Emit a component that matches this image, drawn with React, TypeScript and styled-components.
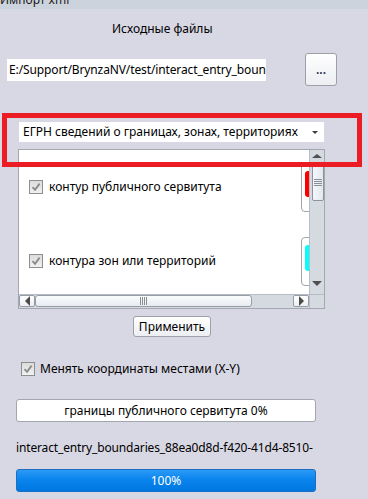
import React from "react";
import styled, { createGlobalStyle, css } from "styled-components";

const Global = createGlobalStyle`
  html, body {
    margin: 0;
    padding: 0;
    width: 368px;
    height: 499px;
    overflow: hidden;
    background: #d8d7e4;
  }
  * { box-sizing: border-box; }
  body {
    font-family: "Noto Sans", "Open Sans", sans-serif;
    font-size: 12px;
    line-height: 16px;
    color: #000;
  }
`;

const Window = styled.div`
  width: 368px;
  height: 499px;
  display: flex;
  flex-direction: column;
  overflow: hidden;
`;

const TitleBar = styled.div`
  height: 9px;
  flex: none;
  background: #cdd3dc;
  overflow: hidden;
`;

const TitleText = styled.div`
  margin-top: -8px;
  padding-left: 0;
  color: #1a1a1a;
`;

const Content = styled.div`
  display: flex;
  flex-direction: column;
  align-items: flex-start;
`;

const Heading = styled.div`
  margin-top: 12px;
  padding-left: 112px;
`;

const FileRow = styled.div`
  margin-top: 16px;
  margin-left: 7px;
  display: flex;
  align-items: center;
  gap: 39px;
`;

const PathField = styled.div`
  width: 259px;
  height: 22px;
  background: #fff;
  padding-left: 2px;
  display: flex;
  align-items: center;
  white-space: nowrap;
  overflow: hidden;
  letter-spacing: -0.12px;
`;

const buttonFace = css`
  border: 1px solid #9ca1a9;
  border-radius: 3px;
  background: linear-gradient(#ffffff, #eceef2);
  display: flex;
  align-items: center;
  justify-content: center;
`;

const BrowseButton = styled.div`
  ${buttonFace};
  width: 32px;
  height: 33px;
  color: #1c2a4a;
  font-weight: 600;
`;

const Highlight = styled.div`
  position: relative;
  z-index: 2;
  margin-top: 36px;
  margin-left: 19px;
  &::after {
    content: "";
    position: absolute;
    left: -17px;
    top: -9px;
    width: 350px;
    height: 44px;
    border: 5px solid #ec1c24;
    pointer-events: none;
  }
`;

const Combo = styled.div`
  width: 305px;
  height: 20px;
  background: #fff;
  display: flex;
  align-items: center;
  padding-left: 4px;
  padding-right: 6px;
  gap: 8px;
  white-space: nowrap;
`;

const ComboText = styled.span`
  flex: 1;
`;

const DownTriangle = styled.span<{ $size?: number; $color?: string }>`
  width: 0;
  height: 0;
  border-left: ${(p) => p.$size ?? 3}px solid transparent;
  border-right: ${(p) => p.$size ?? 3}px solid transparent;
  border-top: ${(p) => p.$size ?? 3}px solid ${(p) => p.$color ?? "#3c3c3c"};
`;

const UpTriangle = styled.span`
  width: 0;
  height: 0;
  border-left: 5px solid transparent;
  border-right: 5px solid transparent;
  border-bottom: 4px solid #505050;
`;

const SideTriangle = styled.span<{ $dir: "left" | "right" }>`
  width: 0;
  height: 0;
  border-top: 5px solid transparent;
  border-bottom: 5px solid transparent;
  ${(p) =>
    p.$dir === "left"
      ? css`border-right: 5px solid #4a4a4a;`
      : css`border-left: 5px solid #4a4a4a;`}
`;

const ListBox = styled.div`
  margin-top: 7px;
  margin-left: 18px;
  width: 307px;
  height: 160px;
  border: 1px solid #a3a7af;
  display: grid;
  grid-template-columns: 290px 15px;
  grid-template-rows: 144px 14px;
  background: #fff;
`;

const Viewport = styled.div`
  overflow: hidden;
  background: #fff;
`;

const Rows = styled.div`
  width: 340px;
  display: flex;
  flex-direction: column;
`;

const ItemRow = styled.div`
  height: 74px;
  display: flex;
  align-items: center;
  padding-left: 10px;
  gap: 6px;
`;

const ItemLabel = styled.span`
  flex: 1;
  white-space: nowrap;
`;

const Swatch = styled.div`
  width: 40px;
  height: 49px;
  margin-right: 18px;
  border: 1px solid #a0a4ab;
  border-radius: 4px;
  background: #fff;
  display: flex;
  align-items: flex-start;
  padding: 7px 0 0 3px;
`;

const SwatchColor = styled.div<{ $c: string }>`
  width: 20px;
  height: 26px;
  border-radius: 3px;
  background: ${(p) => p.$c};
`;

const CheckBoxBox = styled.span`
  width: 14px;
  height: 14px;
  flex: none;
  border: 1px solid #8d8e90;
  background: linear-gradient(#dcdcdc, #f1f1f1);
  display: flex;
  align-items: center;
  justify-content: center;
`;

const CheckBox = () => (
  <CheckBoxBox>
    <svg width="10" height="10" viewBox="0 0 10 10">
      <path d="M1.5 5.2 L4 7.8 L8.6 1.6" fill="none" stroke="#8a8a8a" strokeWidth="1.8" />
    </svg>
  </CheckBoxBox>
);

const VScroll = styled.div`
  background: #d5d9e0;
  border-left: 1px solid #b8bdc5;
  display: flex;
  flex-direction: column;
  align-items: center;
  padding-top: 4px;
`;

const VThumb = styled.div`
  margin-top: 6px;
  margin-left: 1px;
  width: 12px;
  height: 37px;
  border: 1px solid #8d939c;
  border-radius: 2px;
  background: linear-gradient(90deg, #f4f6f9, #e4e8ee);
  display: flex;
  flex-direction: column;
  align-items: center;
  justify-content: center;
  gap: 1px;
`;

const GripH = styled.span`
  width: 8px;
  height: 1px;
  background: #8a8f97;
`;

const VSpacer = styled.div`
  flex: 1;
`;

const VDown = styled.div`
  height: 12px;
  display: flex;
  align-items: flex-start;
  justify-content: center;
  padding-top: 1px;
  margin-bottom: 2px;
`;

const HScroll = styled.div`
  background: #d5d9e0;
  border-top: 1px solid #b8bdc5;
  display: flex;
  align-items: stretch;
  padding-bottom: 1px;
`;

const HButton = styled.div`
  ${buttonFace};
  width: 16px;
  border-radius: 2px;
  border-color: #979da6;
`;

const HThumb = styled.div`
  ${buttonFace};
  width: 217px;
  border-radius: 3px;
  border-color: #979da6;
  background: linear-gradient(#fbfcfd, #e7ebf0);
  gap: 1px;
`;

const GripV = styled.span`
  width: 1px;
  height: 8px;
  background: #8a8f97;
`;

const HSpacer = styled.div`
  flex: 1;
`;

const Corner = styled.div`
  background: #d5d9e0;
  border-left: 1px solid #b8bdc5;
  border-top: 1px solid #b8bdc5;
`;

const ApplyRow = styled.div`
  margin-top: 7px;
  align-self: stretch;
  padding-left: 133px;
`;

const PushButton = styled.div`
  ${buttonFace};
  width: 78px;
  height: 21px;
`;

const CheckRow = styled.label`
  margin-top: 24px;
  margin-left: 21px;
  display: flex;
  align-items: center;
  gap: 5px;
`;

const Progress = styled.div<{ $value: number }>`
  width: 300px;
  height: 23px;
  margin-left: 16px;
  border: 1px solid #a2a6ad;
  border-radius: 3px;
  display: flex;
  align-items: center;
  justify-content: center;
  background: #fff;
  ${(p) =>
    p.$value >= 100 &&
    css`
      border-color: #1b6fc0;
      background: linear-gradient(#2c9af6, #0a84ee 45%, #0077e0);
      color: #fff;
    `}
`;

const ProgressOne = styled(Progress)`
  margin-top: 22px;
`;

const ProgressTwo = styled(Progress)`
  margin-top: 13px;
`;

const FileName = styled.div`
  margin-top: 18px;
  margin-left: 16px;
  width: 301px;
  white-space: nowrap;
  overflow: hidden;
  letter-spacing: -0.15px;
`;

const items = [
  { label: "контур публичного сервитута", color: "#ff0000" },
  { label: "контура зон или территорий", color: "#00ffff" },
];

export default function App() {
  return (
    <>
      <Global />
      <Window>
        <TitleBar>
          <TitleText>Импорт xml</TitleText>
        </TitleBar>
        <Content>
          <Heading>Исходные файлы</Heading>
          <FileRow>
            <PathField>E:/Support/BrynzaNV/test/interact_entry_boundaries_88ea0d8d-f420-41d4-8510-</PathField>
            <BrowseButton>...</BrowseButton>
          </FileRow>
          <Highlight>
            <Combo>
              <ComboText>ЕГРН сведений о границах, зонах, территориях</ComboText>
              <DownTriangle $size={3} />
            </Combo>
          </Highlight>
          <ListBox>
            <Viewport>
              <Rows>
                {items.map((it) => (
                  <ItemRow key={it.label}>
                    <CheckBox />
                    <ItemLabel>{it.label}</ItemLabel>
                    <Swatch>
                      <SwatchColor $c={it.color} />
                    </Swatch>
                  </ItemRow>
                ))}
              </Rows>
            </Viewport>
            <VScroll>
              <UpTriangle />
              <VThumb>
                <GripH />
                <GripH />
                <GripH />
                <GripH />
              </VThumb>
              <VSpacer />
              <VDown>
                <DownTriangle $size={5} $color="#505050" />
              </VDown>
            </VScroll>
            <HScroll>
              <HButton>
                <SideTriangle $dir="left" />
              </HButton>
              <HThumb>
                <GripV />
                <GripV />
                <GripV />
                <GripV />
              </HThumb>
              <HSpacer />
              <HButton>
                <SideTriangle $dir="right" />
              </HButton>
            </HScroll>
            <Corner />
          </ListBox>
          <ApplyRow>
            <PushButton>Применить</PushButton>
          </ApplyRow>
          <CheckRow>
            <CheckBox />
            <span>Менять координаты местами (X-Y)</span>
          </CheckRow>
          <ProgressOne $value={0}>границы публичного сервитута 0%</ProgressOne>
          <FileName>interact_entry_boundaries_88ea0d8d-f420-41d4-8510-</FileName>
          <ProgressTwo $value={100}>100%</ProgressTwo>
        </Content>
      </Window>
    </>
  );
}
